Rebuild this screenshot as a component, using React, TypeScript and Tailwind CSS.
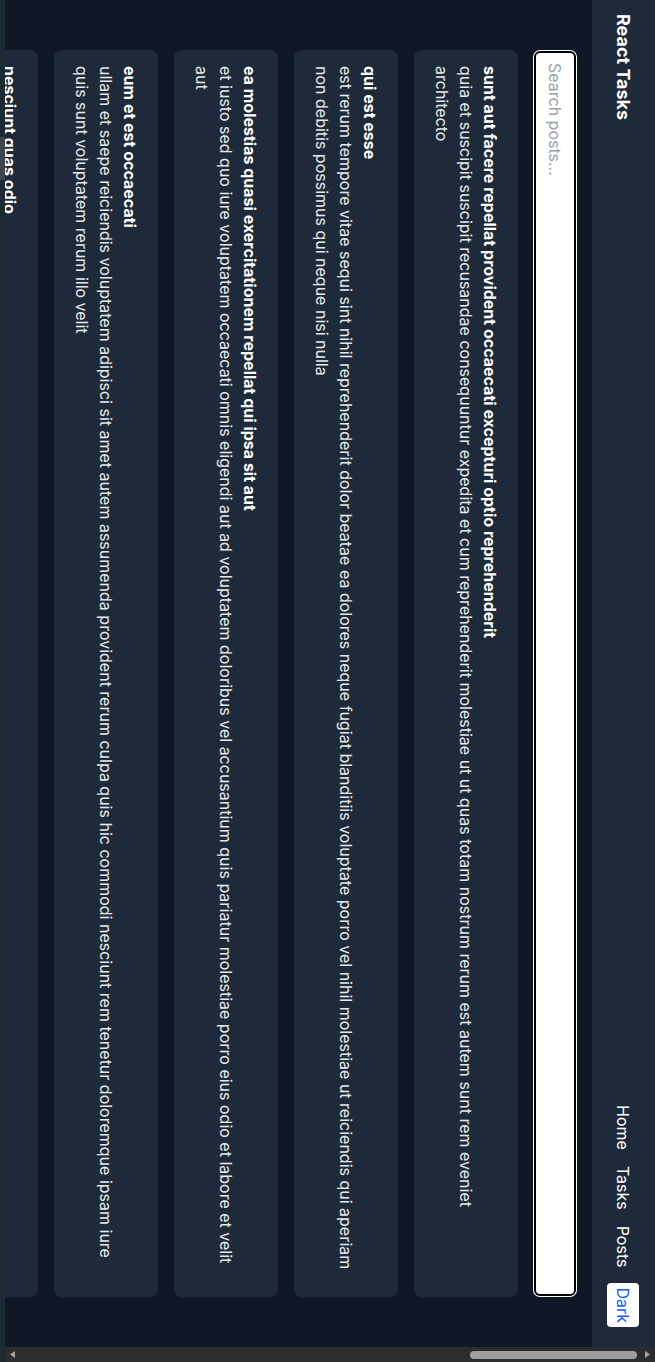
const posts = [
  {
    id: 1,
    title: "sunt aut facere repellat provident occaecati excepturi optio reprehenderit",
    body: "quia et suscipit suscipit recusandae consequuntur expedita et cum reprehenderit molestiae ut ut quas totam nostrum rerum est autem sunt rem eveniet architecto",
  },
  {
    id: 2,
    title: "qui est esse",
    body: "est rerum tempore vitae sequi sint nihil reprehenderit dolor beatae ea dolores neque fugiat blanditiis voluptate porro vel nihil molestiae ut reiciendis qui aperiam non debitis possimus qui neque nisi nulla",
  },
  {
    id: 3,
    title: "ea molestias quasi exercitationem repellat qui ipsa sit aut",
    body: "et iusto sed quo iure voluptatem occaecati omnis eligendi aut ad voluptatem doloribus vel accusantium quis pariatur molestiae porro eius odio et labore et velit aut",
  },
  {
    id: 4,
    title: "eum et est occaecati",
    body: "ullam et saepe reiciendis voluptatem adipisci sit amet autem assumenda provident rerum culpa quis hic commodi nesciunt rem tenetur doloremque ipsam iure quis sunt voluptatem rerum illo velit",
  },
  {
    id: 5,
    title: "nesciunt quas odio",
    body: "repudiandae veniam quaerat sunt sed alias aut fugiat sit autem sed est voluptatem omnis possimus esse voluptatibus quis est aut tenetur dolor neque",
  },
  {
    id: 6,
    title: "dolorem eum magni eos aperiam quia",
    body: "ut aspernatur corporis harum nihil quis provident sequi mollitia nobis aliquid molestiae perspiciatis et ea nemo ab reprehenderit accusantium quas voluptate dolores velit et doloremque molestiae",
  },
  {
    id: 7,
    title: "magnam facilis autem",
    body: "dolore placeat quibusdam ea quo vitae magni quis enim qui quis quo nemo aut saepe quidem repellat excepturi ut quia sunt ut sequi eos ea sed quas",
  },
  {
    id: 8,
    title: "dolorem dolore est ipsam",
    body: "dignissimos aperiam dolorem qui eum facilis quibusdam animi sint suscipit qui sint possimus cum quaerat magni maiores excepturi ipsam ut commodi dolor voluptatum modi aut vitae",
  },
  {
    id: 9,
    title: "nesciunt iure omnis dolorem tempora et accusantium",
    body: "consectetur animi nesciunt iure dolore enim quia ad veniam autem ut quam aut nobis et est aut quod aut provident voluptas autem voluptas",
  },
  {
    id: 10,
    title: "optio molestias id quia eum",
    body: "quo et expedita modi cum officia vel magni doloribus qui repudiandae vero nisi sit quos veniam quod sed accusamus veritatis error",
  },
]

function Header() {
  return (
    <header className="h-[63px] shrink-0 bg-gray-800 flex items-center justify-between pl-[14px] pr-5">
      <h1 className="text-lg font-bold text-white">React Tasks</h1>
      <nav className="flex items-center gap-4 text-white">
        <a href="#">Home</a>
        <a href="#">Tasks</a>
        <a href="#">Posts</a>
        <button className="bg-white text-blue-600 rounded px-1 py-1">Dark</button>
      </nav>
    </header>
  )
}

function PostCard({ title, body }: { title: string; body: string }) {
  return (
    <div className="rounded-lg bg-gray-800 p-4">
      <h2 className="font-bold text-white">{title}</h2>
      <p className="text-gray-200">{body}</p>
    </div>
  )
}

// window scrollbar, drawn by hand (dark theme, scrolled to the top)
function ScrollBar() {
  return (
    <div className="w-[15px] shrink-0 bg-[#2c2c2c] flex flex-col items-center">
      <div className="h-[15px] flex items-center justify-center">
        <svg width="7" height="5" viewBox="0 0 7 5">
          <path d="M3.5 0 L7 5 L0 5 Z" fill="#a3a3a3" />
        </svg>
      </div>
      <div className="flex-1 pt-[3px] pl-px">
        <div className="w-[8px] h-[167px] rounded-full bg-[#9f9f9f]" />
      </div>
      <div className="h-[15px] flex items-center justify-center">
        <svg width="7" height="5" viewBox="0 0 7 5">
          <path d="M0 0 L7 0 L3.5 5 Z" fill="#a3a3a3" />
        </svg>
      </div>
    </div>
  )
}

export default function App() {
  return (
    <div className="w-[655px] h-[1362px] overflow-hidden bg-gray-900 font-['Inter',sans-serif]">
      {/* the whole landscape window is turned a quarter clockwise */}
      <div className="w-[1362px] h-[655px] origin-top-left translate-x-[655px] rotate-90 flex flex-col">
        <div className="h-[650px] flex">
          <div className="flex-1 overflow-hidden bg-gray-900">
            <Header />
            <main className="pt-4 pb-4 px-[50px]">
              <div className="mx-px mb-4">
                <input
                  type="text"
                  placeholder="Search posts..."
                  className="w-full bg-white text-black border-2 border-black rounded-md ring-1 ring-white px-[10px] py-[7px] placeholder:text-gray-400 outline-none"
                />
              </div>
              <div className="flex flex-col gap-4">
                {posts.map((post) => (
                  <PostCard key={post.id} title={post.title} body={post.body} />
                ))}
              </div>
            </main>
          </div>
          <ScrollBar />
        </div>
        <div className="h-[5px] flex bg-[#1c2a33]">
          <div className="w-[137px]" />
          <div className="w-[43px] bg-[#3c4651]" />
        </div>
      </div>
    </div>
  )
}
